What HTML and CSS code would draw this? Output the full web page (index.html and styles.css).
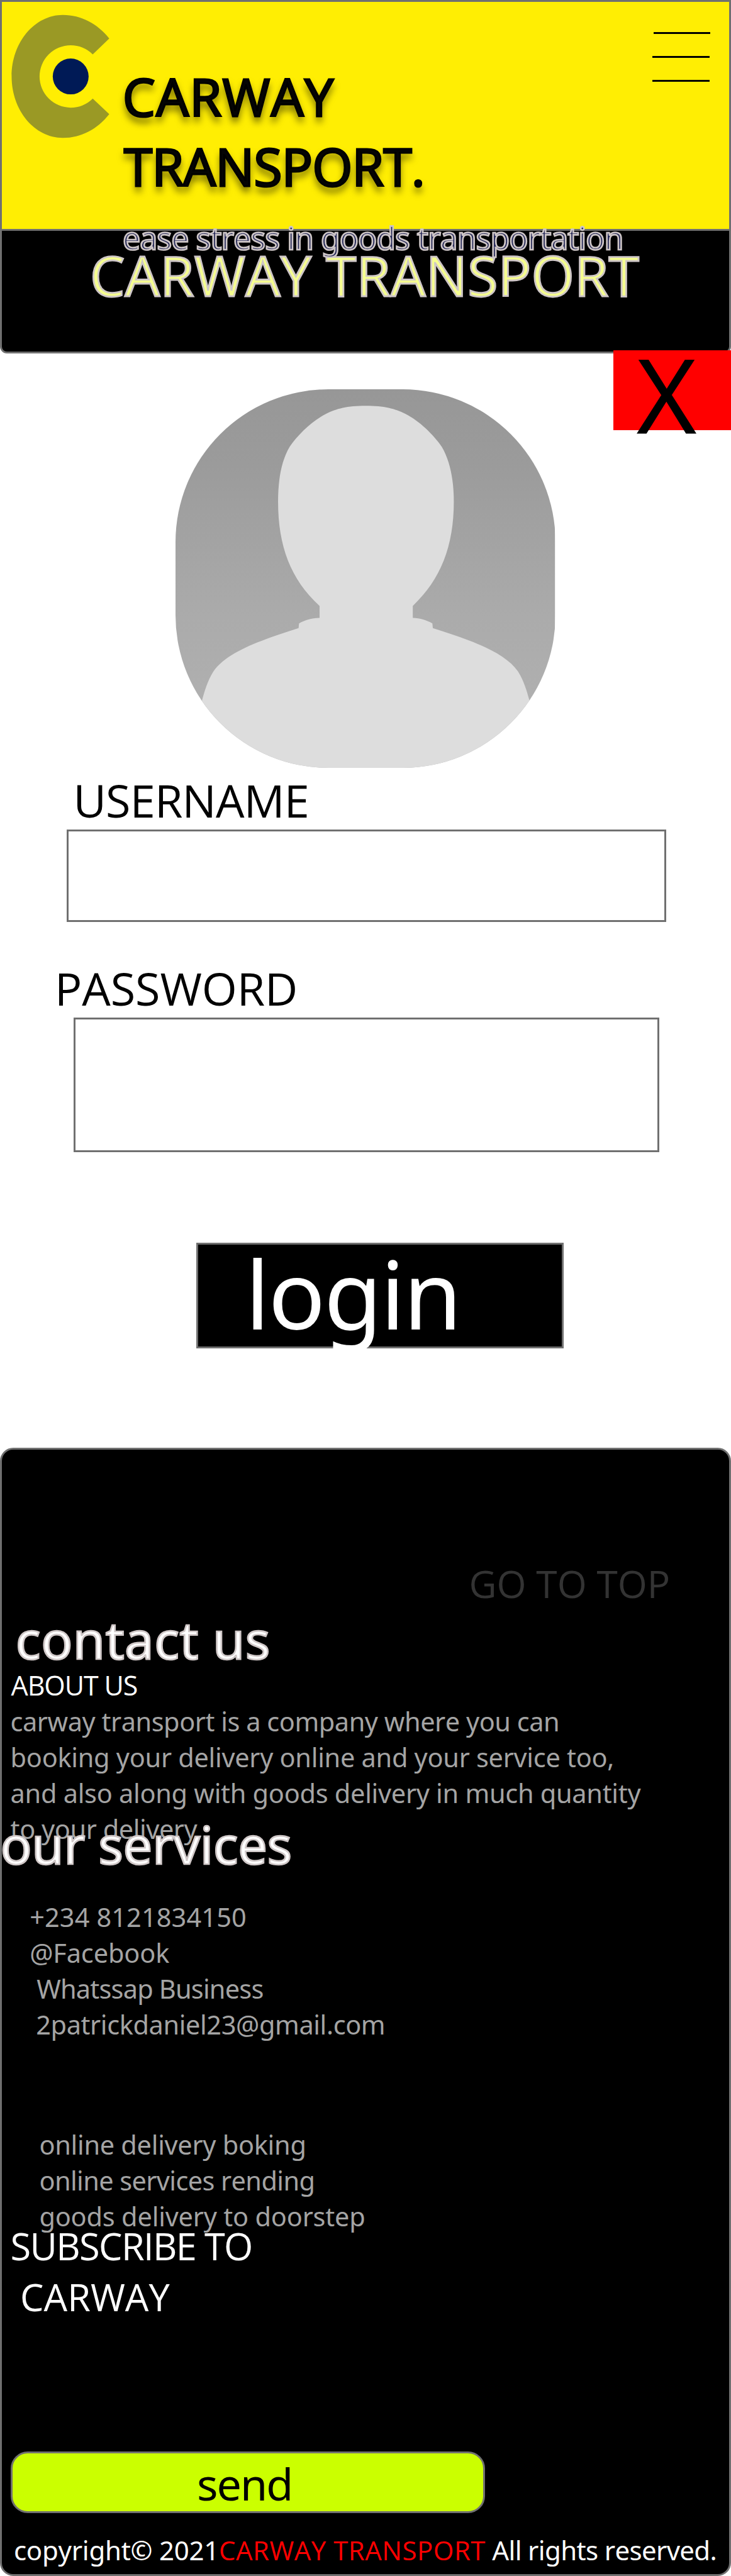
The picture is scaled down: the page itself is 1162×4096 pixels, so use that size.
FILE: index.html
```html
<!DOCTYPE html>
<html lang="en">
<head>
<meta charset="utf-8">
<title>Carway Transport</title>
<link rel="stylesheet" href="styles.css">
</head>
<body>
<div class="page">
  <header class="topbar">
    <svg class="logo" viewBox="0 0 760 960" aria-hidden="true">
      <path fill="#9a9925" d="M415 48C216 48 55 241 55 480S216 912 415 912C545 912 658 850 741 745L625 635A219 219 0 1 1 625 325L741 213C658 110 545 48 415 48Z"/>
      <circle cx="470" cy="480" r="126" fill="#001a56"/>
    </svg>
    <div class="brand">
      <h1 class="brand-name"><span class="brand-first">CARWAY</span><span class="brand-second">TRANSPORT.</span></h1>
      <p class="tagline">ease stress in goods transportation</p>
    </div>
    <div class="menu"><span class="bar bar-top"></span><span class="bar"></span><span class="bar"></span></div>
  </header>
  <section class="hero"><h2 class="hero-title">CARWAY TRANSPORT</h2></section>
  <main class="login">
    <button class="close"><span class="close-x">X</span></button>
    <svg class="avatar" viewBox="377 167 814 1326" preserveAspectRatio="none" aria-hidden="true">
      <defs><linearGradient id="shade" x1="0" y1="0" x2="0" y2="1"><stop offset="0" stop-color="#979797"/><stop offset=".2" stop-color="#9b9b9b"/><stop offset=".6" stop-color="#ababab"/><stop offset="1" stop-color="#b3b3b3"/></linearGradient></defs>
      <path fill="url(#shade)" d="M377 167H1191V1493H377Z"/>
      <path fill="#ddd" d="M785 225C745 225 722 235 700 253C670 278 640 325 622 368C603 420 597 490 597 560C597 715 624 833 686 925V967C668 967 655 975 642 986L641 1003C560 1045 488 1085 458 1155C445 1190 440 1220 434 1255V1493H1136V1255C1130 1220 1125 1190 1112 1155C1082 1085 1010 1045 929 1003L928 986C915 975 902 967 886 967V925C946 833 974 715 974 560C974 490 967 420 948 368C930 325 900 278 870 253C848 235 825 225 785 225Z"/>
    </svg>
    <label class="label label-user" for="username">USERNAME</label>
    <input class="field field-user" id="username" type="text">
    <label class="label label-pass" for="password">PASSWORD</label>
    <input class="field field-pass" id="password" type="password">
    <button class="login-button"><span class="login-text">login</span></button>
  </main>
  <footer class="footer">
    <a class="to-top">GO TO TOP</a>
    <h3 class="heading contact">contact us</h3>
    <h4 class="about-title">ABOUT US</h4>
    <p class="copy about">
      <span class="row about-1">carway transport is a company where you can</span>
      <span class="row">booking your delivery online and your service too,</span>
      <span class="row">and also along with goods delivery in much quantity</span>
      <span class="row about-4">to your delivery</span>
    </p>
    <h3 class="heading services">our services</h3>
    <ul class="copy contacts">
      <li class="row phone">+234 8121834150</li>
      <li class="row facebook">@Facebook</li>
      <li class="row whatsapp">Whatssap Business</li>
      <li class="row mail">2patrickdaniel23@gmail.com</li>
    </ul>
    <ul class="copy offers">
      <li class="row">online delivery boking</li>
      <li class="row rending">online services rending</li>
      <li class="row doorstep">goods delivery to doorstep</li>
    </ul>
    <h4 class="subscribe"><span class="sub-first">SUBSCRIBE TO</span><span class="sub-second">CARWAY</span></h4>
    <button class="send"><span class="send-text">send</span></button>
    <p class="legal"><span class="legal-year">copyright© 2021</span><span class="legal-name">CARWAY TRANSPORT</span><span class="legal-rest"> All rights reserved.</span></p>
  </footer>
</div>
</body>
</html>
```
FILE: styles.css
```css
* { box-sizing: border-box; margin: 0; padding: 0; }

body {
  background: #fff;
  font-family: "Open Sans", "Noto Sans", sans-serif;
  font-weight: 400;
  font-kerning: none;
  color: #000;
}

h1, h2, h3, h4 { font-weight: 400; }
ul { list-style: none; }
button, input { font: inherit; color: inherit; border-radius: 0; }

.page {
  width: 1162px;
  height: 4096px;
  display: flex;
  flex-direction: column;
  overflow: hidden;
  white-space: nowrap;
}

/* lowercase copy uses the face with the single-storey g */
.tagline, .login-text, .heading, .copy, .send-text, .legal {
  font-family: "Noto Sans", "Open Sans", sans-serif;
}

/* header */
.topbar {
  position: relative;
  z-index: 1;
  display: flex;
  align-items: flex-start;
  flex: none;
  height: 367px;
  border: 3px solid #707070;
  background: #ffee03;
}
.logo { width: 172px; height: 217.2px; margin: 10.2px 0 0 3.4px; }
.brand { margin: 94.5px 0 0 16.6px; width: 800px; }
.brand-name {
  display: flex;
  flex-direction: column;
  font-size: 82px;
  line-height: 111.3px;
  color: #050505;
  -webkit-text-stroke: 3.2px #000;
  text-shadow: 0 8.5px 12px rgba(0, 0, 0, .65);
}
.brand-first { letter-spacing: 1.5px; }
.brand-second { letter-spacing: -.7px; padding-left: 2px; }
.tagline {
  margin-top: 32.8px;
  font-size: 50px;
  line-height: 1;
  letter-spacing: -1px;
  color: #202454;
  -webkit-text-stroke: 2.7px #cdc5c6;
}
.menu {
  display: flex;
  flex-direction: column;
  gap: 35px;
  margin: 48px 0 0 42.4px;
}
.bar { width: 90.4px; height: 3px; background: #000; }
.bar-top { margin-left: 1.5px; }

.hero {
  flex: none;
  height: 194.7px;
  padding: 25.6px 0 0 140px;
  border: 3px solid #707070;
  border-top: 0;
  border-radius: 0 0 11px 11px;
  background: #000;
}
.hero-title {
  font-size: 88px;
  line-height: 1;
  letter-spacing: .1px;
  color: #f6fe90;
  -webkit-text-stroke: 2.8px #cfc7c7;
}

/* login form */
.login { display: flex; flex-direction: column; align-items: flex-start; }
.close {
  display: flex;
  align-items: flex-start;
  align-self: flex-end;
  width: 187.4px;
  height: 127.7px;
  margin-top: -5.2px;
  padding-left: 37.8px;
  border: 0;
  background: #f00;
}
.close-x {
  margin-top: -11.5px;
  font-size: 163px;
  line-height: 1;
  -webkit-text-stroke: 1px #000;
}
.avatar {
  width: 603.2px;
  height: 602.5px;
  margin: -65.4px 0 0 279.4px;
  border-radius: 243px;
}
.label { font-size: 72px; line-height: 1; }
.label-user { margin: 14.8px 0 0 116.4px; letter-spacing: -.8px; }
.label-pass { margin: 68.8px 0 0 87px; letter-spacing: -.1px; }
.field { border: 3px solid #707070; background: #fff; }
.field-user { width: 953px; height: 147px; margin: 10.9px 0 0 106px; }
.field-pass { width: 931px; height: 214.6px; margin: 11px 0 0 117px; }
.login-button {
  display: flex;
  align-items: flex-start;
  width: 584px;
  height: 168.5px;
  margin: 143.6px 0 0 312px;
  padding: 2px 0 0 75px;
  border: 3px solid #707070;
  background: #000;
  color: #fff;
}
.login-text { font-size: 150px; line-height: 1; letter-spacing: -2.2px; }

/* footer */
.footer {
  display: flex;
  flex-direction: column;
  align-items: flex-start;
  flex: none;
  height: 1793.6px;
  margin-top: 157.9px;
  border: 3px solid #707070;
  border-radius: 21px;
  background: #000;
  color: #fff;
}
.to-top {
  margin: 183px 0 0 742.6px;
  font-size: 60.5px;
  line-height: 1;
  color: #333;
}
.heading {
  font-size: 83px;
  line-height: 1;
  -webkit-text-stroke: 2.7px #d0c8c8;
}
.contact { margin: 15px 0 0 21.8px; letter-spacing: .5px; }
.services { position: relative; margin: -46.5px 0 0 -2.5px; letter-spacing: -.4px; }
.about-title {
  margin: 11px 0 0 14.6px;
  font-size: 43px;
  line-height: 1;
  letter-spacing: -1.1px;
}
.copy {
  display: flex;
  flex-direction: column;
  font-size: 41.5px;
  line-height: 57px;
  letter-spacing: -.29px;
  color: #a4a4a4;
}
.about { margin: 7.8px 0 0 13.6px; }
.about-1 { letter-spacing: -.47px; }
.about-4 { letter-spacing: -.45px; }
.contacts { margin: 47.2px 0 0 44.2px; }
.phone { letter-spacing: .1px; }
.facebook { letter-spacing: -.15px; }
.whatsapp { padding-left: 11px; letter-spacing: -.8px; }
.mail { padding-left: 10px; letter-spacing: -.4px; }
.offers { margin: 133.3px 0 0 59.4px; }
.rending { letter-spacing: -.6px; }
.doorstep { letter-spacing: -.2px; }
.subscribe {
  display: flex;
  flex-direction: column;
  margin: -21.6px 0 0 13.6px;
  font-size: 59.5px;
  line-height: 80.8px;
}
.sub-first { letter-spacing: -1.65px; }
.sub-second { padding-left: 15.5px; }
.send {
  display: flex;
  align-items: flex-start;
  width: 754.4px;
  height: 97.7px;
  margin: 205.2px 0 0 13.5px;
  padding: 13.2px 0 0 293.4px;
  border: 3px solid #707070;
  border-radius: 27px;
  background: #cbff00;
  color: #000;
}
.send-text { font-size: 70px; line-height: 1; letter-spacing: -2px; }
.legal {
  margin: 38.7px 0 0 18.9px;
  font-size: 42px;
  line-height: 1;
  white-space: pre;
}
.legal-year { letter-spacing: -.25px; }
.legal-name { color: #f00; font-family: "Open Sans", sans-serif; letter-spacing: .5px; }
.legal-rest { letter-spacing: -.65px; }
```
